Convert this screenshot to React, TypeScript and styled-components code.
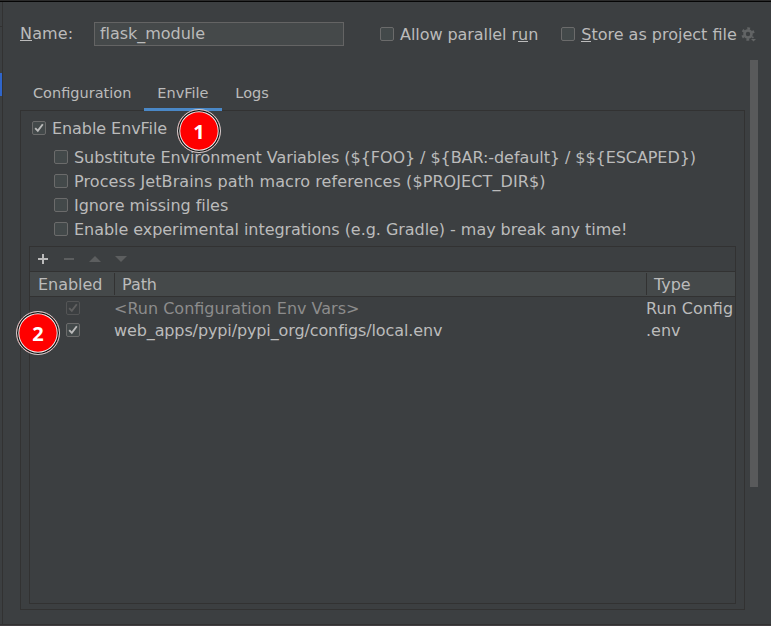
import React from "react";
import styled, { createGlobalStyle } from "styled-components";

const Global = createGlobalStyle`
  * { box-sizing: border-box; }
  body { margin: 0; background: #3c3f41; overflow: hidden; }
`;

const Window = styled.div`
  width: 771px;
  height: 626px;
  display: grid;
  grid-template-columns: 3px 1fr;
  grid-template-rows: 2px 1fr 2px;
  background: #3c3f41;
  color: #bbbbbb;
  font: 16px/20px "DejaVu Sans", sans-serif;
  white-space: nowrap;
`;
const TopEdge = styled.div`
  grid-column: 1 / -1;
  background: #2b2b2b;
  border-bottom: 1px solid #050505;
`;
const BottomEdge = styled.div`
  grid-column: 1 / -1;
  border-top: 1px solid #323232;
  background: #413e41;
`;
const TreeSliver = styled.div`
  border-right: 1px solid #323232;
  padding-top: 24px;
`;
const TreeRule = styled.div`
  height: 47px;
  border-top: 1px solid #323232;
`;
const TreeSelection = styled.div`
  height: 23px;
  background: #2f65ca;
`;
const Main = styled.main`
  display: grid;
  grid-template-columns: 1fr 8px;
  column-gap: 5px;
  padding-right: 13px;
  grid-template-rows: 58px 1fr;
  min-width: 0;
`;
const NameBar = styled.header`
  grid-column: 1 / -1;
  display: flex;
  align-items: flex-start;
  padding: 20px 0 0 17px;
  margin-right: -13px;
`;
const NameLabel = styled.label`
  width: 74px;
  padding-top: 2px;
  letter-spacing: 0.15px;
`;
const NameField = styled.div`
  width: 250px;
  height: 24px;
  border: 1px solid #646464;
  background: #45494a;
  padding: 1px 5px;
  margin-right: 36px;
  letter-spacing: -0.04px;
`;
const Mnemonic = styled.span`
  background: linear-gradient(#bbbbbb, #bbbbbb) 0 calc(100% - 2px) / 100% 1px no-repeat;
`;
const CheckLine = styled.label<{ $gap?: number }>`
  display: flex;
  align-items: center;
  gap: 6px;
  height: 24px;
  margin-right: ${(p) => p.$gap ?? 0}px;
`;
const Caption = styled.span<{ $track?: number }>`
  padding-top: 2px;
  letter-spacing: ${(p) => p.$track ?? 0}px;
`;
const Box = styled.span<{ $dim?: boolean }>`
  flex: none;
  width: 14px;
  height: 14px;
  border: 1px solid ${(p) => (p.$dim ? "#545556" : "#6b6b6b")};
  border-radius: 2px;
  background: ${(p) => (p.$dim ? "#3c3f41" : "#43494a")};
  color: ${(p) => (p.$dim ? "#606060" : "#bbbbbb")};
  svg { display: block; }
`;
const Content = styled.section`
  display: flex;
  flex-direction: column;
  padding-left: 17px;
  min-width: 0;
`;
const Tabs = styled.nav`
  display: flex;
  position: relative;
  height: 50px;
  padding-top: 20px;
  font-size: 14.5px;
`;
const Tab = styled.div<{ $active?: boolean }>`
  height: 31px;
  padding: 3px 13px 0;
  border-bottom: 3px solid ${(p) => (p.$active ? "#4a88c7" : "transparent")};
`;
const ActiveTab = styled(Tab)`
  width: 78px;
`;
const Panel = styled.div`
  width: 725px;
  height: 500px;
  border: 1px solid #323232;
  padding: 5px 8px;
`;
const Options = styled.div`
  padding: 5px 0 0 25px;
`;
const EnableLine = styled.div`
  padding-left: 3px;
`;
const Files = styled.div`
  height: 358px;
  margin-top: 5px;
  border: 1px solid #323232;
  overflow: hidden;
`;
const Toolbar = styled.div`
  display: flex;
  align-items: center;
  height: 24px;
  padding-left: 5px;
  gap: 10px;
  color: #5c5e5f;
`;
const Row = styled.div<{ $dim?: boolean }>`
  display: grid;
  grid-template-columns: 84px 532px 1fr;
  height: 22px;
  line-height: 24px;
  color: ${(p) => (p.$dim ? "#8c8c8c" : "#bbbbbb")};
`;
const HeadRow = styled(Row)`
  height: 26px;
  border: solid #323232;
  border-width: 1px 0;
  background: #45494a;
`;
const HeadCell = styled.div<{ $divided?: boolean }>`
  margin: 1px 0;
  height: 22px;
  padding-left: ${(p) => (p.$divided ? 7 : 8)}px;
  border-left: ${(p) => (p.$divided ? "1px solid #323232" : "none")};
  letter-spacing: -0.05px;
`;
const CheckCell = styled.div`
  display: flex;
  justify-content: center;
  align-items: center;
  height: 22px;
  padding-left: 2px;
`;
const PathCell = styled.div<{ $track?: number }>`
  letter-spacing: ${(p) => p.$track ?? 0}px;
`;
const TypeCell = styled.div`
  color: #bbbbbb;
`;
const Scrollbar = styled.div`
  height: 427px;
  background: #595a5b;
`;
const Callout = styled.div<{ $x: number; $y: number }>`
  position: absolute;
  left: ${(p) => p.$x}px;
  top: ${(p) => p.$y}px;
  width: 44px;
  height: 44px;
  border-radius: 50%;
  background: #ff0000;
  border: 1px solid #d0d0d0;
  box-shadow: inset 0 0 0 1.3px #111, inset 0 0 0 2.3px #eee;
  color: #fff;
  font: bold 20px/43px "Noto Sans", sans-serif;
  text-align: center;
`;

function Check({ on, dim }: { on?: boolean; dim?: boolean }) {
  return (
    <Box $dim={dim}>
      {on && (
        <svg width="12" height="12" viewBox="0 0 12 12" fill="none" stroke="currentColor" strokeWidth="1.9">
          <path d="M2.2 6.2 4.8 8.9 9.8 2.2" />
        </svg>
      )}
    </Box>
  );
}

function Gear() {
  return (
    <svg width="16" height="16" viewBox="0 0 16 16" fill="none" stroke="#626465">
      <circle cx="7" cy="8" r="3.5" strokeWidth="2.6" />
      <circle cx="7" cy="8" r="5.5" strokeWidth="2.4" strokeDasharray="2.6 3.16" strokeDashoffset="1.3" transform="rotate(30 7 8)" />
      <path d="M10 13h5l-2.5 2.5z" fill="#626465" stroke="none" />
    </svg>
  );
}

const toolIcons = [
  { d: "M7 3h2v4h4v2H9v4H7V9H3V7h4z", fill: "#bbbbbb" },
  { d: "M3 7h10v2H3z", fill: "currentColor" },
  { d: "M2 11 8 5l6 6z", fill: "currentColor" },
  { d: "M2 5h12l-6 6z", fill: "currentColor" },
];

const options = [
  { text: "Substitute Environment Variables (${FOO} / ${BAR:-default} / $${ESCAPED})", track: -0.067 },
  { text: "Process JetBrains path macro references ($PROJECT_DIR$)", track: 0.088 },
  { text: "Ignore missing files", track: -0.05 },
  { text: "Enable experimental integrations (e.g. Gradle) - may break any time!", track: -0.045 },
];

export default function App() {
  return (
    <Window>
      <Global />
      <TopEdge />
      <TreeSliver>
        <TreeRule />
        <TreeSelection />
      </TreeSliver>
      <Main>
        <NameBar>
          <NameLabel><Mnemonic>N</Mnemonic>ame:</NameLabel>
          <NameField>flask_module</NameField>
          <CheckLine $gap={23}>
            <Check />
            <Caption $track={-0.06}>Allow parallel r<Mnemonic>u</Mnemonic>n</Caption>
          </CheckLine>
          <CheckLine $gap={4}>
            <Check />
            <Caption><Mnemonic>S</Mnemonic>tore as project file</Caption>
          </CheckLine>
          <CheckLine><Gear /></CheckLine>
        </NameBar>
        <Content>
          <Tabs>
            <Tab>Configuration</Tab>
            <ActiveTab $active>EnvFile</ActiveTab>
            <Tab>Logs</Tab>
          </Tabs>
          <Panel>
            <EnableLine>
              <CheckLine><Check on /><Caption $track={-0.07}>Enable EnvFile</Caption></CheckLine>
            </EnableLine>
            <Options>
              {options.map((o) => (
                <CheckLine key={o.text}><Check /><Caption $track={o.track}>{o.text}</Caption></CheckLine>
              ))}
            </Options>
            <Files>
              <Toolbar>
                {toolIcons.map((t) => (
                  <svg key={t.d} width="16" height="16" viewBox="0 0 16 16"><path d={t.d} fill={t.fill} /></svg>
                ))}
              </Toolbar>
              <HeadRow>
                <HeadCell>Enabled</HeadCell>
                <HeadCell $divided>Path</HeadCell>
                <HeadCell $divided>Type</HeadCell>
              </HeadRow>
              <Row $dim>
                <CheckCell><Check on dim /></CheckCell>
                <PathCell>&lt;Run Configuration Env Vars&gt;</PathCell>
                <TypeCell>Run Config</TypeCell>
              </Row>
              <Row>
                <CheckCell><Check on /></CheckCell>
                <PathCell $track={-0.115}>web_apps/pypi/pypi_org/configs/local.env</PathCell>
                <TypeCell>.env</TypeCell>
              </Row>
            </Files>
          </Panel>
        </Content>
        <Scrollbar />
      </Main>
      <BottomEdge />
      <Callout $x={177} $y={109}>1</Callout>
      <Callout $x={16} $y={311}>2</Callout>
    </Window>
  );
}
